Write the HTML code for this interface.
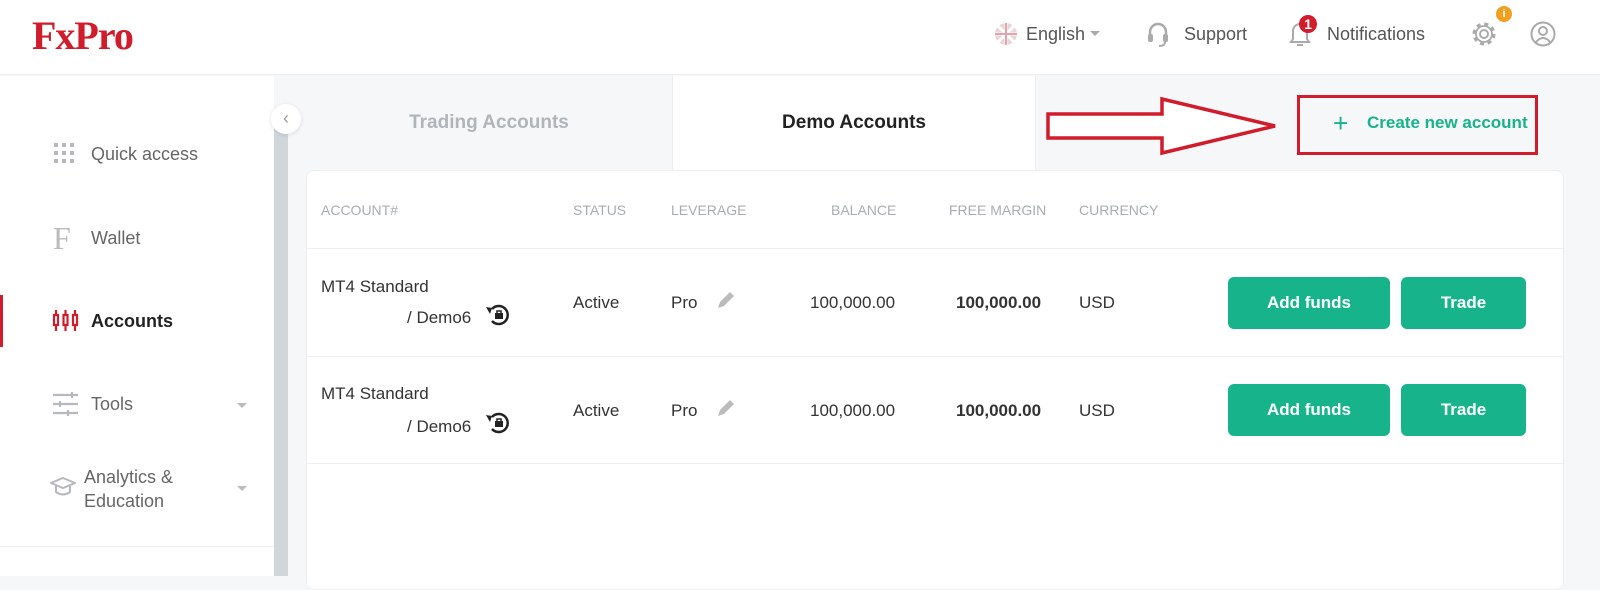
<!DOCTYPE html>
<html><head><meta charset="utf-8"><style>
*{margin:0;padding:0;box-sizing:border-box}
body{width:1600px;height:576px;overflow:hidden;background:#f6f7f8;font-family:"Liberation Sans",Arial,sans-serif;position:relative;color:#333}
.abs{position:absolute}
.hdr{left:0;top:0;width:1600px;height:75px;background:#fff;border-bottom:1px solid #eceeef}
.logo{left:32px;top:12px;font-family:"Liberation Serif",serif;font-weight:bold;font-size:40px;color:#d01c2b;letter-spacing:-1px}
.ht{font-size:18px;color:#555;top:24px}
.side{left:0;top:76px;width:274px;height:500px;background:#fff}
.scroll{left:274px;top:124px;width:14px;height:452px;background:#d1d6da}
.nav{left:91px;font-size:18px;color:#666}
.tab{top:76px;height:94px;font-size:19px;font-weight:bold;display:flex;align-items:center;justify-content:center}
.card{left:306px;top:170px;width:1258px;height:420px;background:#fff;border:1px solid #eceeef;border-radius:8px}
.th{top:202px;font-size:14px;color:#a8adb2}
.c{font-size:17px;color:#333}
.btn{background:#17b48c;color:#fff;font-weight:bold;font-size:17px;border-radius:6px;display:flex;align-items:center;justify-content:center;height:52px}
.line{left:307px;width:1256px;height:1px;background:#eef0f1}
</style></head><body>
<div class="abs hdr"></div>
<div class="abs logo">FxPro</div>
<svg class="abs" style="left:994px;top:22px" width="24" height="24" viewBox="0 0 24 24"><circle cx="12" cy="12" r="11" fill="#e9d6dc"/><path d="M12 1v22M1 12h22M4 4l16 16M20 4L4 20" stroke="#fff" stroke-width="3"/><path d="M12 1v22M1 12h22" stroke="#e3a3ae" stroke-width="2"/></svg>
<div class="abs ht" style="left:1026px">English</div>
<div class="abs" style="left:1090px;top:31px;border-left:5px solid transparent;border-right:5px solid transparent;border-top:5px solid #aaa"></div>
<svg class="abs" style="left:1146px;top:21px" width="24" height="28" viewBox="0 0 24 28"><path d="M4 16v-5a8 8 0 0 1 16 0v5" fill="none" stroke="#aaa" stroke-width="2.5"/><rect x="2" y="13" width="5" height="8" rx="2" fill="#aaa"/><rect x="17" y="13" width="5" height="8" rx="2" fill="#aaa"/><path d="M19 21q0 4-6 4" stroke="#aaa" stroke-width="2" fill="none"/></svg>
<div class="abs ht" style="left:1184px">Support</div>
<svg class="abs" style="left:1286px;top:14px" width="32" height="34" viewBox="0 0 32 34"><path d="M5 28h18l-2-3v-8a7 7 0 0 0-14 0v8z" fill="none" stroke="#aaa" stroke-width="2"/><path d="M11 31h6" stroke="#aaa" stroke-width="2"/><circle cx="22" cy="10" r="9" fill="#d01c2b"/><text x="22" y="15" font-size="14" font-weight="bold" fill="#fff" text-anchor="middle" font-family="Liberation Sans">1</text></svg>
<div class="abs ht" style="left:1327px">Notifications</div>
<svg class="abs" style="left:1470px;top:20px" width="28" height="28" viewBox="0 0 28 28"><circle cx="14" cy="14" r="4" fill="none" stroke="#aaa" stroke-width="2"/><circle cx="14" cy="14" r="10" fill="none" stroke="#aaa" stroke-width="3" stroke-dasharray="4 3.85"/><circle cx="14" cy="14" r="8" fill="#fff" stroke="#aaa" stroke-width="1.8"/><circle cx="14" cy="14" r="4" fill="none" stroke="#aaa" stroke-width="2"/></svg>
<div class="abs" style="left:1496px;top:6px;width:16px;height:16px;border-radius:50%;background:#f0a01e;color:#fff;font-size:11px;text-align:center;line-height:16px;font-weight:bold">i</div>
<svg class="abs" style="left:1530px;top:21px" width="26" height="26" viewBox="0 0 26 26"><circle cx="13" cy="13" r="11.5" fill="none" stroke="#aaa" stroke-width="2"/><circle cx="13" cy="10" r="4" fill="none" stroke="#aaa" stroke-width="2"/><path d="M6 21q7-8 14 0" fill="none" stroke="#aaa" stroke-width="2"/></svg>

<div class="abs side"></div>
<div class="abs" style="left:0;top:546px;width:274px;height:1px;background:#eceeef"></div>
<div class="abs scroll"></div>
<div class="abs" style="left:271px;top:104px;width:30px;height:30px;border-radius:50%;background:#fff;box-shadow:0 1px 4px rgba(0,0,0,.12);color:#999;font-size:18px;text-align:center;line-height:28px">‹</div>
<svg class="abs" style="left:54px;top:143px" width="22" height="20"><g fill="#b5b9bd"><rect x="0" y="0" width="4" height="4"/><rect x="8" y="0" width="4" height="4"/><rect x="16" y="0" width="4" height="4"/><rect x="0" y="8" width="4" height="4"/><rect x="8" y="8" width="4" height="4"/><rect x="16" y="8" width="4" height="4"/><rect x="0" y="16" width="4" height="4"/><rect x="8" y="16" width="4" height="4"/><rect x="16" y="16" width="4" height="4"/></g></svg>
<div class="abs nav" style="top:144px">Quick access</div>
<div class="abs" style="left:53px;top:220px;font-family:'Liberation Serif',serif;font-size:32px;color:#bbb">F</div>
<div class="abs nav" style="top:228px">Wallet</div>
<div class="abs" style="left:0;top:295px;width:3px;height:52px;background:#d01c2b"></div>
<svg class="abs" style="left:52px;top:309px" width="27" height="24" viewBox="0 0 27 24" fill="none" stroke="#d01c2b" stroke-width="2.2"><rect x="2" y="6" width="4" height="10"/><path d="M4 1v5M4 16v6"/><rect x="11.5" y="6" width="4" height="10"/><path d="M13.5 1v5M13.5 16v6"/><rect x="21" y="6" width="4" height="10"/><path d="M23 1v5M23 16v6"/></svg>
<div class="abs nav" style="top:311px;color:#222;font-weight:bold;font-size:18px">Accounts</div>
<svg class="abs" style="left:52px;top:392px" width="27" height="24" stroke="#b5b9bd" stroke-width="2.2"><path d="M1 3h25M1 12h25M1 21h25"/><path d="M20 0v6M8 9v6M16 18v6" /></svg>
<div class="abs nav" style="top:394px">Tools</div>
<div class="abs" style="left:237px;top:403px;border-left:5px solid transparent;border-right:5px solid transparent;border-top:5px solid #bbb"></div>
<svg class="abs" style="left:50px;top:476px" width="26" height="22" fill="none" stroke="#b5b9bd" stroke-width="2"><path d="M1 7l12-5 12 5-12 5z"/><path d="M6 10v6q7 5 14 0v-6"/></svg>
<div class="abs nav" style="left:84px;top:465px;line-height:24px">Analytics &amp;<br>Education</div>
<div class="abs" style="left:237px;top:486px;border-left:5px solid transparent;border-right:5px solid transparent;border-top:5px solid #bbb"></div>

<div class="abs tab" style="left:306px;width:366px;color:#b0b5ba;background:#f6f7f8">Trading Accounts</div>
<div class="abs tab" style="left:672px;width:364px;color:#222;background:#fff;border-left:1px solid #eceeef;border-right:1px solid #eceeef">Demo Accounts</div>
<div class="abs" style="left:1036px;top:76px;width:528px;height:94px;background:#f6f7f8"></div>

<svg class="abs" style="left:1040px;top:95px" width="250" height="66" viewBox="0 0 250 66"><path d="M8 19H122V4L235 31 122 58V43H8Z" fill="#fff" stroke="#d01c2b" stroke-width="3.5" stroke-linejoin="miter"/></svg>
<div class="abs" style="left:1297px;top:95px;width:241px;height:60px;border:3px solid #d01c2b"></div>
<div class="abs" style="left:1333px;top:108px;font-size:26px;color:#17b48c;font-weight:300">+</div>
<div class="abs" style="left:1367px;top:113px;font-size:17px;color:#17b48c;font-weight:bold">Create new account</div>

<div class="abs card"></div>
<div class="abs th" style="left:321px">ACCOUNT#</div>
<div class="abs th" style="left:573px">STATUS</div>
<div class="abs th" style="left:671px">LEVERAGE</div>
<div class="abs th" style="left:831px">BALANCE</div>
<div class="abs th" style="left:949px">FREE MARGIN</div>
<div class="abs th" style="left:1079px">CURRENCY</div>
<div class="abs line" style="top:248px"></div>
<div class="abs line" style="top:356px"></div>
<div class="abs line" style="top:463px"></div>

<div class="abs c" style="left:321px;top:277px">MT4 Standard</div>
<div class="abs c" style="left:407px;top:308px">/ Demo6</div>
<div class="abs c" style="left:573px;top:293px">Active</div>
<div class="abs c" style="left:671px;top:293px">Pro</div>
<div class="abs c" style="left:810px;top:293px">100,000.00</div>
<div class="abs c" style="left:956px;top:293px;font-weight:bold">100,000.00</div>
<div class="abs c" style="left:1079px;top:293px">USD</div>
<div class="abs btn" style="left:1228px;top:277px;width:162px">Add funds</div>
<div class="abs btn" style="left:1401px;top:277px;width:125px">Trade</div>

<div class="abs c" style="left:321px;top:384px">MT4 Standard</div>
<div class="abs c" style="left:407px;top:417px">/ Demo6</div>
<div class="abs c" style="left:573px;top:401px">Active</div>
<div class="abs c" style="left:671px;top:401px">Pro</div>
<div class="abs c" style="left:810px;top:401px">100,000.00</div>
<div class="abs c" style="left:956px;top:401px;font-weight:bold">100,000.00</div>
<div class="abs c" style="left:1079px;top:401px">USD</div>
<div class="abs btn" style="left:1228px;top:384px;width:162px">Add funds</div>
<div class="abs btn" style="left:1401px;top:384px;width:125px">Trade</div>

<svg class="abs" style="left:484px;top:303px" width="28" height="24" viewBox="0 0 28 24"><path d="M8 6a9 9 0 1 1 0 12" fill="none" stroke="#222" stroke-width="2.5"/><path d="M2 4l6 1-2 6z" fill="#222"/><rect x="11" y="10" width="8" height="6" fill="#222"/><path d="M13 10v-2h4v2" stroke="#222" stroke-width="1.5" fill="none"/></svg>
<svg class="abs" style="left:484px;top:411px" width="28" height="24" viewBox="0 0 28 24"><path d="M8 6a9 9 0 1 1 0 12" fill="none" stroke="#222" stroke-width="2.5"/><path d="M2 4l6 1-2 6z" fill="#222"/><rect x="11" y="10" width="8" height="6" fill="#222"/><path d="M13 10v-2h4v2" stroke="#222" stroke-width="1.5" fill="none"/></svg>
<svg class="abs" style="left:716px;top:290px" width="20" height="20"><path d="M2 18l2-6L14 2l4 4L8 16z" fill="#bbb"/></svg>
<svg class="abs" style="left:716px;top:398px" width="20" height="20"><path d="M2 18l2-6L14 2l4 4L8 16z" fill="#bbb"/></svg>
</body></html>
